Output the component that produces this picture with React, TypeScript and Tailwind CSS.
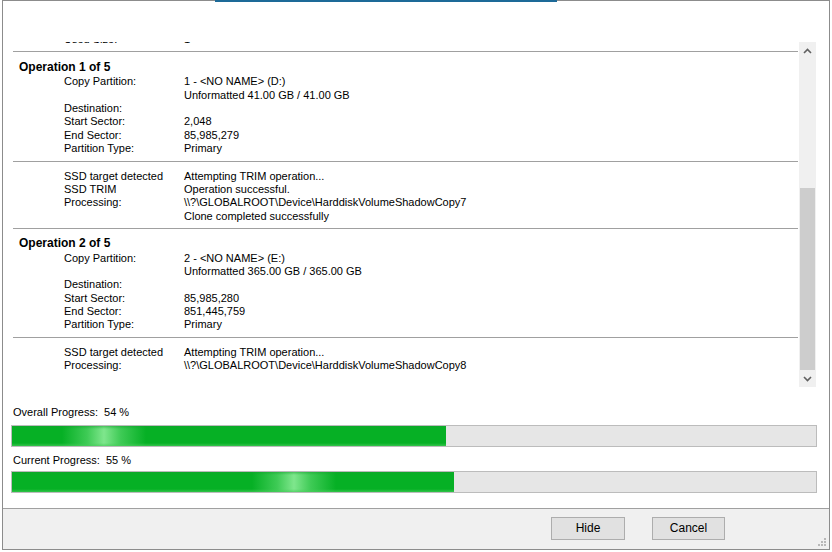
import React from "react";

type Row = [string, string];

const block1: Row[] = [
  ["Copy Partition:", "1 - <NO NAME> (D:)"],
  ["", "Unformatted 41.00 GB / 41.00 GB"],
  ["Destination:", ""],
  ["Start Sector:", "2,048"],
  ["End Sector:", "85,985,279"],
  ["Partition Type:", "Primary"],
];
const block2: Row[] = [
  ["SSD target detected", "Attempting TRIM operation..."],
  ["SSD TRIM", "Operation successful."],
  ["Processing:", "\\\\?\\GLOBALROOT\\Device\\HarddiskVolumeShadowCopy7"],
  ["", "Clone completed successfully"],
];
const block3: Row[] = [
  ["Copy Partition:", "2 - <NO NAME> (E:)"],
  ["", "Unformatted 365.00 GB / 365.00 GB"],
  ["Destination:", ""],
  ["Start Sector:", "85,985,280"],
  ["End Sector:", "851,445,759"],
  ["Partition Type:", "Primary"],
];
const block4: Row[] = [
  ["SSD target detected", "Attempting TRIM operation..."],
  ["Processing:", "\\\\?\\GLOBALROOT\\Device\\HarddiskVolumeShadowCopy8"],
];

function Rows({ rows }: { rows: Row[] }) {
  return (
    <>
      {rows.map(([l, v], i) => (
        <div key={i} className="flex h-[13.4px] leading-[13.4px] text-[11px] whitespace-pre">
          <div className="w-[172px] pl-[52px] shrink-0">{l}</div>
          <div>{v}</div>
        </div>
      ))}
    </>
  );
}

function Sep() {
  return <div className="h-px bg-[#a0a0a0] mx-px" />;
}

function Block({ title, rows, pt = "pt-[8px]" }: { title?: string; rows: Row[]; pt?: string }) {
  return (
    <div className={`${pt} pb-[5px]`}>
      {title && (
        <div className="pl-[7px] h-[15.3px] leading-[15px] text-[12px] font-bold">{title}</div>
      )}
      <Rows rows={rows} />
    </div>
  );
}

function Chevron({ up }: { up?: boolean }) {
  return (
    <svg width="9" height="6" viewBox="0 0 9 6">
      <path
        d={up ? "M1 5 L4.5 1.5 L8 5" : "M1 1 L4.5 4.5 L8 1"}
        fill="none"
        stroke="#606060"
        strokeWidth="1.6"
      />
    </svg>
  );
}

function Progress({
  label,
  pct,
  glow,
  barMt = "mt-[6px]",
}: {
  label: string;
  pct: number;
  glow: number;
  barMt?: string;
}) {
  return (
    <div>
      <div className="pl-[2px] text-[11px] leading-[13px] whitespace-pre">{label}</div>
      <div className={`${barMt} h-[22px] border border-[#bcbcbc] bg-[#e6e6e6]`}>
        <div className="relative h-full bg-[#06b025] overflow-hidden" style={{ width: `${pct}%` }}>
          <div
            className="absolute top-0 h-full w-[84px] bg-[linear-gradient(to_right,rgba(6,176,37,0)_0%,rgba(100,220,118,0.6)_30%,rgba(140,236,152,0.9)_50%,rgba(100,220,118,0.6)_70%,rgba(6,176,37,0)_100%)]"
            style={{ left: glow }}
          />
          <div className="absolute left-0 right-0 top-0 h-[3px] bg-[linear-gradient(to_top,rgba(6,176,37,0),rgba(20,160,45,0.5))]" />
          <div className="absolute left-0 right-0 bottom-0 h-[3px] bg-[linear-gradient(to_bottom,rgba(6,176,37,0),rgba(70,205,90,0.7))]" />
        </div>
      </div>
    </div>
  );
}

export default function App() {
  return (
    <div
      className="w-[832px] h-[552px] bg-white overflow-hidden pl-[2px] text-black"
      style={{ fontFamily: '"Liberation Sans", Arial, sans-serif' }}
    >
      <div className="relative w-[828px] h-[550px] border-l border-r border-b border-t border-[#8c8c8c] flex flex-col">
        <div className="absolute left-[212px] top-[-1px] w-[342px] h-[2px] bg-[#1d6a98]" />
        <div className="flex-1 flex flex-col">
          <div className="h-[41px]" />
          <div className="flex ml-[9px] mr-[13px] h-[345px]">
            <div className="flex-1 overflow-hidden">
              <div className="h-[2px] overflow-hidden">
                <div className="-mt-[9px]">
                  <Rows rows={[["Used Size:", "1"]]} />
                </div>
              </div>
              <div className="h-[7px]" />
              <Sep />
              <Block title="Operation 1 of 5" rows={block1} />
              <Sep />
              <Block rows={block2} />
              <Sep />
              <Block title="Operation 2 of 5" rows={block3} pt="pt-[7px]" />
              <Sep />
              <Block rows={block4} />
            </div>
            <div className="w-[17px] bg-[#f0f0f0] flex flex-col">
              <div className="h-[17px] flex items-center justify-center">
                <Chevron up />
              </div>
              <div className="flex-1 flex flex-col">
                <div className="h-[129px]" />
                <div className="flex-1 mx-px bg-[#cdcdcd]" />
              </div>
              <div className="h-[17px] flex items-center justify-center">
                <Chevron />
              </div>
            </div>
          </div>
          <div className="ml-[8px] mr-[12px] mt-[19px] flex flex-col gap-[7px]">
            <Progress label="Overall Progress:  54 %" pct={54} glow={50} />
            <Progress label="Current Progress:  55 %" pct={55} glow={240} barMt="mt-[4px]" />
          </div>
        </div>
        <div className="h-[41px] border-t border-[#a0a0a0] bg-[#f0f0f0] flex items-start justify-end pr-[104px] pt-[8px] gap-[27px] relative">
          <button className="w-[74px] h-[23px] border border-[#adadad] bg-[#e1e1e1] text-[12px] leading-[21px]">
            Hide
          </button>
          <button className="w-[73px] h-[23px] border border-[#adadad] bg-[#e1e1e1] text-[12px] leading-[21px]">
            Cancel
          </button>
          <svg className="absolute right-[2px] bottom-[2px]" width="10" height="10" viewBox="0 0 10 10">
            {[
              [7, 1],
              [4, 4],
              [7, 4],
              [1, 7],
              [4, 7],
              [7, 7],
            ].map(([x, y], i) => (
              <rect key={i} x={x} y={y} width="2" height="2" fill="#b8b8b8" />
            ))}
          </svg>
        </div>
      </div>
    </div>
  );
}
